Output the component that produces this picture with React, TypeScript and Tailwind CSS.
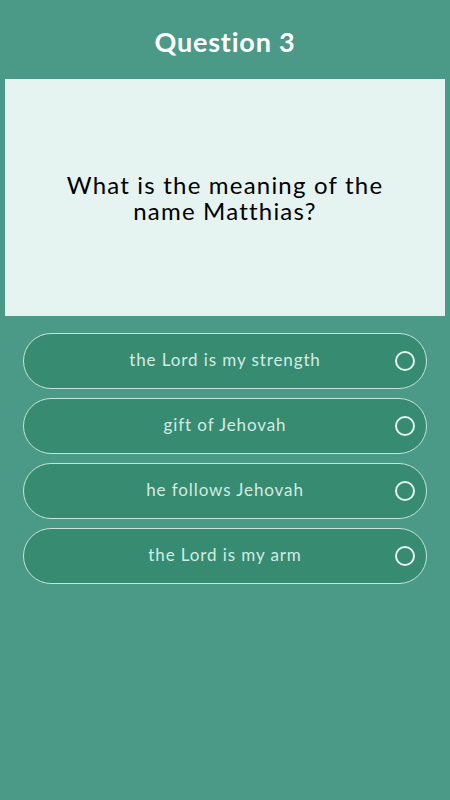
const options = [
  "the Lord is my strength",
  "gift of Jehovah",
  "he follows Jehovah",
  "the Lord is my arm",
];

export default function App() {
  return (
    <div
      className="min-h-[800px] w-full bg-[#4a9a87] flex flex-col"
      style={{ fontFamily: "Lato, 'Noto Sans', sans-serif" }}
    >
      <h1 className="h-[79px] pt-[24px] text-center text-[27px] leading-[36px] font-bold text-white tracking-[0.8px]">
        Question 3
      </h1>

      <div className="mx-[5px] h-[237px] bg-[#e5f4f0] flex items-center justify-center px-6">
        <p className="text-center text-[24px] leading-[26px] text-black tracking-[1.2px]">
          What is the meaning of the
          <br />
          name Matthias?
        </p>
      </div>

      <div className="flex flex-col gap-[9px] px-[23px] pt-[17px]">
        {options.map((opt) => (
          <button
            key={opt}
            className="relative h-[56px] w-full rounded-full border border-[#c6e4dc] bg-[#368b70] flex items-center justify-center"
          >
            <span className="-mt-[3px] text-[17px] text-[#d3ebe4] tracking-[0.9px]">{opt}</span>
            <span className="absolute right-[11px] top-1/2 -translate-y-1/2 h-[20px] w-[20px] rounded-full border-[2.5px] border-[#e3f3ee]"></span>
          </button>
        ))}
      </div>
    </div>
  );
}
